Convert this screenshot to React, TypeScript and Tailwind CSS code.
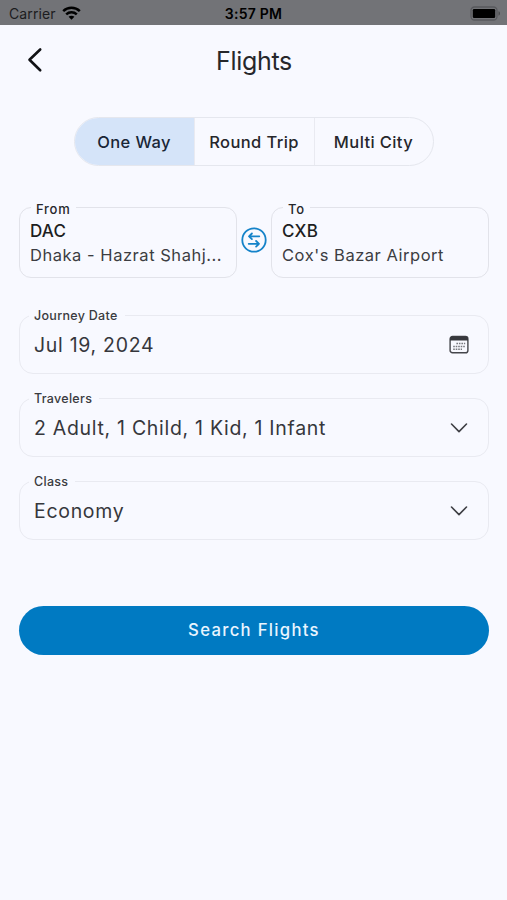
import { useState } from 'react';
import type { ReactNode } from 'react';

const TRIP_TYPES = ['One Way', 'Round Trip', 'Multi City'];

function StatusBar() {
    return (
        <div className="grid h-[25px] grid-cols-3 items-center bg-[#727377] pt-[2px] text-black">
            <div className="flex items-center gap-[6px] pl-[9px]">
                <span className="text-[14px] leading-none tracking-[0.1px] text-[#1c1c1e]">Carrier</span>
                <svg width="19" height="14" viewBox="0 0 19 14" fill="none" stroke="currentColor" strokeWidth="2.5" className="mb-[2px]">
                    <path d="M1.2 5.1C5.8.7 13.2.7 17.8 5.1" />
                    <path d="M4.2 8.3c3-2.8 7.6-2.8 10.6 0" />
                    <path d="M9.5 13.7 6.6 10.8c1.6-1.5 4.2-1.5 5.8 0Z" fill="currentColor" stroke="none" />
                </svg>
            </div>
            <span className="pt-px text-center text-[14px] leading-none font-semibold tracking-[0.25px]">3:57 PM</span>
            <div className="flex items-center justify-end pr-[6px] pb-[1px]">
                <svg width="31" height="15" viewBox="0 0 31 15">
                    <rect x="1" y="1" width="26" height="13" rx="3.5" fill="none" stroke="#58595d" strokeWidth="1.3" />
                    <rect x="2.8" y="2.9" width="22.4" height="9.2" rx="1.3" fill="#000" />
                    <path d="M28.5 5.3c2 .6 2 3.8 0 4.4Z" fill="#4b4c4f" />
                </svg>
            </div>
        </div>
    );
}

function SwapIcon() {
    return (
        <svg width="26" height="26" viewBox="0 0 26 26" fill="none" stroke="#1583c9" strokeWidth="1.8" strokeLinecap="round" strokeLinejoin="round">
            <circle cx="13" cy="13" r="11.7" />
            <path d="M18.3 9.3H8M10.9 6.5 8 9.3l2.9 2.8" />
            <path d="M7.7 16.8H18M15.1 14l2.9 2.8-2.9 2.8" />
        </svg>
    );
}

function CalendarIcon() {
    return (
        <svg width="20" height="20" viewBox="0 0 20 20" fill="none">
            <rect x="1.1" y="1.5" width="17.8" height="16.3" rx="2.4" stroke="#45464b" strokeWidth="1.4" />
            <path d="M1 5.6V4a2.8 2.8 0 0 1 2.8-2.8h12.4A2.8 2.8 0 0 1 19 4v1.6Z" fill="#37383d" />
            <path d="M7.4 8.6h8.8M4.2 11.4h12M4.2 14.2h8.8" stroke="#77787d" strokeWidth="1.5" strokeDasharray="1.6 .9" />
        </svg>
    );
}

function DownIcon() {
    return (
        <svg width="20" height="20" viewBox="0 0 20 20" fill="none" stroke="#3e3f44" strokeWidth="1.6" strokeLinecap="round" strokeLinejoin="round">
            <path d="m2.5 6 7.5 7.6L17.5 6" />
        </svg>
    );
}

function AirportCard({ label, code, name }: { label: string; code: string; name: string }) {
    return (
        <div className="relative h-[71px] w-[218px] rounded-[12px] border-[1.5px] border-[#e2e3ea] pt-[13px] pl-[10px]">
            <span className="absolute -top-[6px] left-[11px] bg-[#f8f9ff] px-[5px] text-[13px] leading-[14px] font-medium tracking-[0.75px]">
                {label}
            </span>
            <p className="text-[17px] leading-[20px] font-medium tracking-[0.2px] text-[#1d1e22]">{code}</p>
            <p className="mt-[4px] text-[16.5px] leading-[20px] tracking-[0.53px] whitespace-nowrap text-[#3c3d42]">{name}</p>
        </div>
    );
}

function SelectField({ label, value, icon }: { label: string; value: string; icon: ReactNode }) {
    return (
        <div className="relative flex h-[59px] items-center justify-between rounded-[14px] border border-[#e9eaf1] pr-[19px] pl-[14px]">
            <span className="absolute -top-[8px] left-[9px] bg-[#f8f9ff] pr-[7px] pl-[5px] text-[12.5px] leading-[15px] font-medium tracking-[0.3px] text-[#3a3b40]">
                {label}
            </span>
            <span className="pt-px text-[19.5px] leading-[24px] tracking-[0.7px] text-[#36373c]">{value}</span>
            {icon}
        </div>
    );
}

export default function App() {
    const [tripType, setTripType] = useState('One Way');

    return (
        <div className="min-h-[900px] w-full bg-[#f8f9ff] font-['Inter',sans-serif] text-[#26272b]">
            <StatusBar />

            <header className="grid h-[70px] grid-cols-[60px_1fr_60px] items-center">
                <button className="flex pl-[25px]" aria-label="Back">
                    <svg width="20" height="26" viewBox="0 0 20 26" fill="none" stroke="#111215" strokeWidth="2.6" strokeLinecap="round" strokeLinejoin="round">
                        <path d="M15.2 2.5 4.5 12.8l10.7 10.5" />
                    </svg>
                </button>
                <h1 className="pt-px pl-px text-center text-[25px] leading-[30px] font-normal tracking-[-0.3px]">Flights</h1>
            </header>

            <main className="pt-[22px] pr-[18px] pl-[19px]">
                <div className="mx-auto grid h-[49px] w-[360px] grid-cols-[120px_120px_1fr] divide-x divide-[#e9eaf1] overflow-hidden rounded-full border border-[#e5e7ee]">
                    {TRIP_TYPES.map((type) => (
                        <button
                            key={type}
                            onClick={() => setTripType(type)}
                            className={`pt-px pr-px text-[16.5px] font-medium tracking-[0.4px] whitespace-nowrap ${type === tripType ? 'bg-[#d5e4f9] text-[#192636]' : ''}`}
                        >
                            {type}
                        </button>
                    ))}
                </div>

                <div className="mt-[41px] flex items-center justify-between">
                    <AirportCard label="From" code="DAC" name="Dhaka - Hazrat Shahj..." />
                    <button className="mb-[6px]" aria-label="Swap airports">
                        <SwapIcon />
                    </button>
                    <AirportCard label="To" code="CXB" name="Cox's Bazar Airport" />
                </div>

                <div className="mt-[37px] flex flex-col gap-[24px]">
                    <SelectField label="Journey Date" value="Jul 19, 2024" icon={<CalendarIcon />} />
                    <SelectField label="Travelers" value="2 Adult, 1 Child, 1 Kid, 1 Infant" icon={<DownIcon />} />
                    <SelectField label="Class" value="Economy" icon={<DownIcon />} />
                </div>

                <button className="mt-[66px] h-[49px] w-full rounded-full bg-[#007ac2] text-[16.7px] font-medium tracking-[1.3px] text-[#e9f5ff]">
                    Search Flights
                </button>
            </main>
        </div>
    );
}
